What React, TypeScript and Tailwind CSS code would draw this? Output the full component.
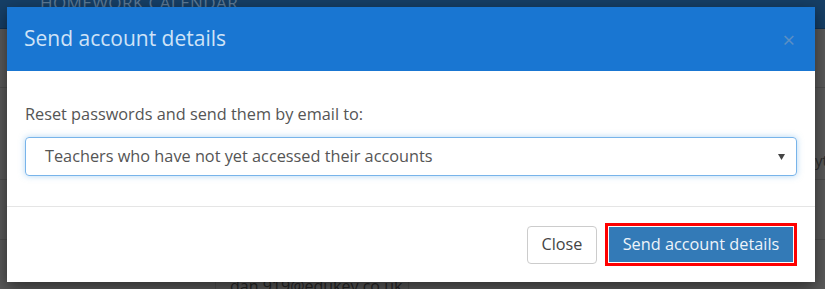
// Page behind the modal, dimmed by the backdrop
function Backdrop() {
    return (
        <div className="flex h-full w-full flex-col">
            <div className="relative h-[29px] shrink-0 border-b border-[#123252] bg-[#163f66]">
                <span className="absolute left-[40px] top-[-10px] text-[17px] tracking-wide text-[#5d7a96]">
                    HOMEWORK CALENDAR
                </span>
            </div>
            <div className="relative flex-1 bg-[#5a5a5a]">
                <div className="absolute left-0 top-[58px] h-px w-full bg-[#4e4e4e]" />
                <div className="absolute left-0 top-[150px] h-px w-full bg-[#4e4e4e]" />
                <div className="absolute left-0 top-[210px] h-px w-full bg-[#4e4e4e]" />
                <div className="absolute left-[215px] top-[210px] h-[60px] w-px bg-[#4e4e4e]" />
                <div className="absolute left-[408px] top-[210px] h-[60px] w-px bg-[#4e4e4e]" />
                <span className="absolute left-[815px] top-[120px] text-[15px] text-[#2e2e2e]">yt</span>
                <span className="absolute left-[230px] top-[245px] text-[16px] text-[#262626]">
                    dan.919@edukey.co.uk
                </span>
            </div>
        </div>
    );
}

export default function App() {
    return (
        <div
            className="relative h-[289px] w-[825px] overflow-hidden"
            style={{ fontFamily: '"Open Sans", "Liberation Sans", sans-serif' }}
        >
            <Backdrop />

            {/* Modal */}
            <div className="absolute left-[7px] top-[7px] flex w-[808px] flex-col bg-white shadow-[0_5px_15px_rgba(0,0,0,0.5)]">
                <div className="flex h-[64px] items-center justify-between bg-[#1976d2] pl-[17px] pr-[20px]">
                    <h4 className="text-[21px] text-[#cfe3f7]">Send account details</h4>
                    <button className="text-[22px] leading-none text-[#5b8fc4]">×</button>
                </div>

                <div className="border-b border-[#e5e5e5] px-[18px] pb-[30px] pt-[33px]">
                    <label className="block text-[16.3px] leading-[20px] text-[#555]">
                        Reset passwords and send them by email to:
                    </label>
                    <div className="mt-[13px] flex h-[39px] items-center justify-between rounded-[4px] border border-[#78b4ea] pl-[19px] pr-[11px] shadow-[0_0_6px_rgba(102,175,233,0.5)]">
                        <span className="text-[16.3px] text-[#555]">Teachers who have not yet accessed their accounts</span>
                        <svg width="7" height="6" viewBox="0 0 7 6">
                            <path d="M0 0h7L3.5 6z" fill="#444" />
                        </svg>
                    </div>
                </div>

                <div className="flex items-center justify-end gap-[8px] pb-[16px] pl-[18px] pr-[18px] pt-[16px]">
                    <button className="h-[38px] w-[70px] rounded-[4px] border border-[#ccc] bg-white text-[16.2px] text-[#444]">
                        Close
                    </button>
                    <div className="border-[3px] border-[#f00] p-px">
                        <button className="h-[35px] w-[184px] bg-[#337ab7] text-[16.3px] text-[#eef4fa]">
                            Send account details
                        </button>
                    </div>
                </div>
            </div>
        </div>
    );
}
